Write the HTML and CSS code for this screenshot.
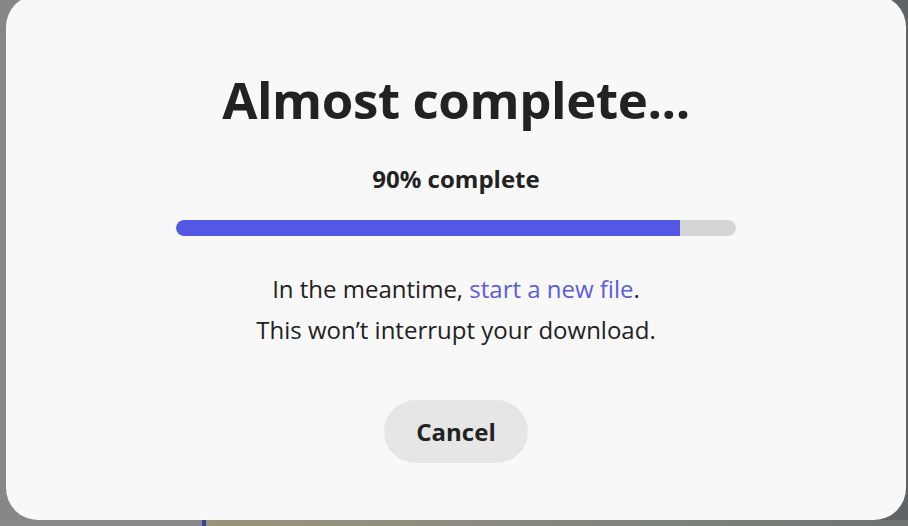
FILE: index.html
```html
<!DOCTYPE html>
<html>
<head>
    <meta charset="utf-8">
    <title>Almost complete</title>
    <link rel="stylesheet" href="styles.css">
</head>
<body>
    <div class="backdrop">
        <div class="dialog">
            <h1 class="title">Almost complete...</h1>
            <div class="status">90% complete</div>
            <div class="track">
                <div class="fill" style="width: 90%"></div>
            </div>
            <p class="note">
                In the meantime, <a href="#" class="link">start a new file</a>.<br />
                This won&rsquo;t interrupt your download.
            </p>
            <button class="cancel">Cancel</button>
        </div>
        <div class="strip">
            <div class="strip-left"></div>
            <div class="strip-mark"></div>
            <div class="strip-photo"></div>
        </div>
    </div>
</body>
</html>
```

FILE: styles.css
```css
html, body {
    margin: 0;
    height: 100%;
    overflow: hidden;
}

body {
    background: linear-gradient(90deg, #878787 0%, #7a7a7a 60%, #5f6366 100%);
    font-family: "Open Sans", "Liberation Sans", sans-serif;
    color: #222222;
}

.backdrop {
    display: flex;
    flex-direction: column;
    height: 100%;
}

.dialog {
    box-sizing: border-box;
    margin: -5px 2px 0 6px;
    height: 525px;
    background: #f8f8f8;
    border-radius: 32px;
    display: flex;
    flex-direction: column;
    align-items: center;
    padding-top: 72px;
}

.title {
    margin: 0;
    font-size: 51px;
    font-weight: 700;
    line-height: 64px;
    letter-spacing: -0.4px;
}

.status {
    margin-top: 33px;
    font-size: 24px;
    font-weight: 700;
    line-height: 30px;
}

.track {
    margin-top: 26px;
    width: 560px;
    height: 16px;
    border-radius: 8px;
    background: #d5d5d5;
    overflow: hidden;
}

.fill {
    height: 100%;
    background: #5258e4;
    border-radius: 8px 0 0 8px;
}

.note {
    margin: 32px 0 0;
    font-size: 24px;
    line-height: 41px;
    text-align: center;
}

.link {
    color: #5a5ce0;
    text-decoration: none;
}

.cancel {
    margin-top: 50px;
    width: 144px;
    height: 63px;
    border: none;
    border-radius: 32px;
    background: #e6e6e6;
    font-family: inherit;
    font-size: 24px;
    font-weight: 700;
    color: #222222;
}

.strip {
    display: flex;
    flex: 1;
}

.strip-left {
    width: 202px;
    background: #888888;
}

.strip-mark {
    width: 4px;
    background: #3c3f9c;
}

.strip-photo {
    flex: 1;
    background: linear-gradient(90deg, #9a9478 0%, #8a8a80 40%, #6f7474 100%);
}
```
